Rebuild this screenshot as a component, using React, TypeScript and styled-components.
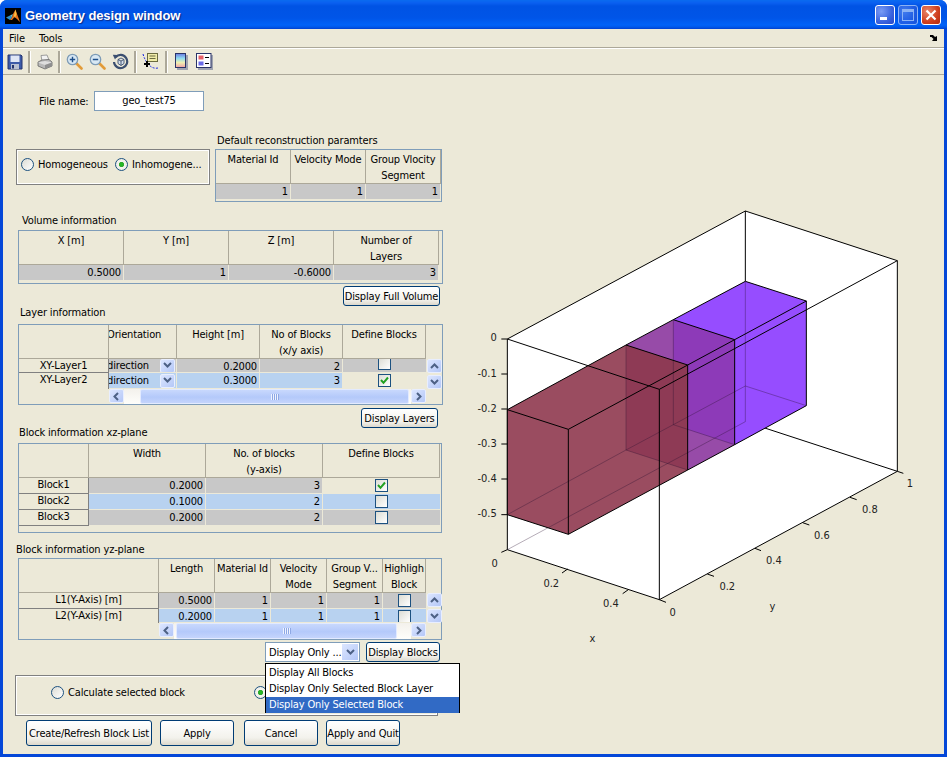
import React from "react";
import styled, { createGlobalStyle } from "styled-components";

const Global = createGlobalStyle`
  html, body { margin: 0; padding: 0; background: #fff; }
  * { box-sizing: border-box; }
`;

const Window = styled.div`
  width: 947px;
  height: 757px;
  display: flex;
  flex-direction: column;
  background: #0447d8;
  border-radius: 7px 7px 0 0;
  overflow: hidden;
  font-family: "DejaVu Sans Condensed", "Liberation Sans", Arial, sans-serif;
  font-size: 11px;
  letter-spacing: -0.15px;
  color: #000;
`;
const TitleBar = styled.div`
  height: 29px;
  flex: none;
  display: flex;
  align-items: center;
  padding: 0 6px 0 5px;
  background: linear-gradient(180deg, #0a6bf0 0, #0a5ff0 3px, #0053e4 6px, #0055e8 18px, #0062f8 25px, #0058ea 27px, #0040d0 29px);
`;
const LogoBox = styled.div`
  width: 16px;
  height: 16px;
  margin-top: 2px;
  flex: none;
`;
const TitleText = styled.span`
  margin-left: 4px;
  padding-top: 2px;
  flex: 1;
  color: #fff;
  font-family: "Liberation Sans", Arial, sans-serif;
  font-size: 13px;
  font-weight: 700;
  letter-spacing: -0.1px;
  text-shadow: 1px 1px 1px #0a2a8a;
`;
const WinButton = styled.div<{ $close?: boolean; $off?: boolean }>`
  width: 20px;
  height: 20px;
  margin-left: 3px;
  border: 1px solid #fff;
  border-radius: 3px;
  display: flex;
  align-items: center;
  justify-content: center;
  opacity: ${(p) => (p.$off ? 0.55 : 1)};
  background: ${(p) =>
    p.$close
      ? "radial-gradient(circle at 30% 30%, #e9866a, #cf3f1e 60%, #b22a10)"
      : "radial-gradient(circle at 30% 30%, #7a9cf5, #3a63de 60%, #2748c8)"};
`;
const Body = styled.div`
  flex: 1;
  margin: 0 3px 3px;
  background: #ece9d8;
  display: flex;
  flex-direction: column;
  min-height: 0;
`;
const MenuBar = styled.div`
  height: 19px;
  flex: none;
  display: flex;
  align-items: center;
  padding-left: 6px;
  position: relative;
  border-bottom: 1px solid #aca899;
`;
const MenuItem = styled.span`
  margin-right: 14px;
  font-size: 11px;
`;
const DockArrow = styled.svg`
  position: absolute;
  right: 6px;
  top: 6px;
`;
const ToolBar = styled.div`
  height: 27px;
  flex: none;
  display: flex;
  align-items: center;
  border-top: 1px solid #fff;
  border-bottom: 1px solid #aca899;
`;
const ToolSlot = styled.div`
  width: 23px;
  height: 24px;
  display: flex;
  align-items: center;
  justify-content: center;
`;
const ToolSep = styled.div<{ $w?: number }>`
  width: ${(p) => p.$w ?? 7}px;
  height: 22px;
  display: flex;
  justify-content: center;
  &::before {
    content: "";
    width: 2px;
    height: 100%;
    background: #aca899;
    border-right: 1px solid #fff;
  }
`;
const Content = styled.div`
  flex: 1;
  display: flex;
  min-height: 0;
`;
const LeftColumn = styled.div`
  width: 467px;
  flex: none;
  display: flex;
  flex-direction: column;
  position: relative;
`;
const ChartPane = styled.div`
  flex: 1;
  padding-top: 124px;
`;
const FileRow = styled.div`
  margin-top: 16px;
  height: 20px;
  padding-left: 36px;
  display: flex;
  align-items: center;
`;
const FileLabel = styled.span`
  width: 55px;
  flex: none;
`;
const FileInput = styled.div`
  width: 110px;
  height: 20px;
  border: 1px solid #7f9db9;
  background: #fff;
  text-align: center;
  line-height: 18px;
`;
const TopRow = styled.div`
  margin-top: 22px;
  padding-left: 13px;
  display: flex;
  align-items: flex-start;
`;
const RadioPanel = styled.div`
  margin-top: 16px;
  width: 194px;
  height: 36px;
  border: 1px solid #808080;
  box-shadow: 0 0 0 1px #fff inset;
  display: flex;
  align-items: center;
  padding: 0 0 5px 4px;
`;
const RadioItem = styled.label<{ $w?: number; $ml?: number }>`
  display: flex;
  align-items: center;
  gap: 4px;
  white-space: nowrap;
  ${(p) => (p.$w ? `width: ${p.$w}px;` : "")}
  ${(p) => (p.$ml ? `margin-left: ${p.$ml}px;` : "")}
`;
const RadioDot = styled.span<{ $on?: boolean }>`
  width: 13px;
  height: 13px;
  flex: none;
  border-radius: 50%;
  border: 1px solid #1c5180;
  background: ${(p) =>
    p.$on
      ? "radial-gradient(circle, #21c121 0, #2ba82b 2.2px, #f4f4ee 3px, #e8e8de 100%)"
      : "linear-gradient(135deg, #dcdcd4, #fff)"};
`;
const TableStack = styled.div`
  margin-left: 5px;
  display: flex;
  flex-direction: column;
`;
const Label = styled.div<{ $left: number; $top?: number; $bottom?: number }>`
  height: 14px;
  line-height: 16px;
  white-space: nowrap;
  margin-left: ${(p) => p.$left}px;
  margin-top: ${(p) => p.$top ?? 0}px;
  margin-bottom: ${(p) => p.$bottom ?? 0}px;
`;
const TableBox = styled.div<{ $cols: string; $rows: string; $w: number; $ml?: number; $pb?: number }>`
  width: ${(p) => p.$w}px;
  margin-left: ${(p) => p.$ml ?? 0}px;
  border: 1px solid #7f9db9;
  padding-bottom: ${(p) => p.$pb ?? 0}px;
  display: grid;
  grid-template-columns: ${(p) => p.$cols};
  grid-template-rows: ${(p) => p.$rows};
`;
const HeadCell = styled.div`
  border-right: 1px solid #aca899;
  border-bottom: 1px solid #aca899;
  text-align: center;
  line-height: 16px;
  padding-top: 2px;
  overflow: hidden;
  white-space: nowrap;
`;
const ClippedHead = styled(HeadCell)`
  text-align: left;
  text-indent: -2px;
`;
const CornerCell = styled(HeadCell)``;
const HeadFiller = styled.div``;
const RowHead = styled.div<{ $last?: boolean }>`
  border-right: 1px solid #808080;
  border-bottom: ${(p) => (p.$last ? "0" : "1px solid #808080")};
  text-align: center;
  line-height: 14px;
  overflow: hidden;
  white-space: nowrap;
`;
const RowHeadEnd = styled(RowHead)`
  border-bottom: 1px solid #808080;
`;
const DataCell = styled.div<{ $sel?: boolean }>`
  background: ${(p) => (p.$sel ? "#b8d2f0" : "#c8c8c8")};
  border-right: 1px solid #ece9d8;
  border-bottom: 1px solid #ece9d8;
  text-align: right;
  padding-right: 2px;
  line-height: 15px;
  overflow: hidden;
  white-space: nowrap;
`;
const ComboCell = styled(DataCell)`
  display: flex;
  align-items: center;
  text-align: left;
  padding-right: 1px;
  justify-content: space-between;
`;
const ComboText = styled.span`
  margin-left: -2px;
`;
const CheckCell = styled.div<{ $bg?: string; $align?: string; $pad?: string }>`
  background: ${(p) => p.$bg ?? "transparent"};
  border-bottom: 1px solid #ece9d8;
  display: flex;
  justify-content: center;
  align-items: ${(p) => p.$align ?? "center"};
  padding: ${(p) => p.$pad ?? "0"};
  overflow: hidden;
`;
const CheckBox = styled.span`
  width: 13px;
  height: 13px;
  flex: none;
  border: 1px solid #1c5180;
  background: linear-gradient(135deg, #dcdcd4, #fff);
  display: flex;
  align-items: center;
  justify-content: center;
`;
const VScroll = styled.div<{ $col: number }>`
  grid-column: ${(p) => p.$col};
  grid-row: 2 / span 2;
  display: flex;
  flex-direction: column;
  justify-content: space-between;
  padding: 0 0 0 1px;
`;
const ScrollBtn = styled.div`
  width: 15px;
  height: 14px;
  flex: none;
  border-radius: 2px;
  background: linear-gradient(135deg, #dce6ff, #b4c7f7);
  border: 1px solid #e8eeff;
  display: flex;
  align-items: center;
  justify-content: center;
`;
const HScroll = styled.div<{ $from: number; $to: number }>`
  grid-column: ${(p) => p.$from} / ${(p) => p.$to};
  grid-row: 4;
  display: flex;
  align-items: stretch;
`;
const HTrack = styled.div<{ $l: number; $r: number }>`
  flex: 1;
  display: flex;
  padding: 0 ${(p) => p.$r}px 0 ${(p) => p.$l}px;
  background: linear-gradient(180deg, #f3f1ec, #fefefb);
`;
const HThumb = styled.div`
  flex: 1;
  border: 1px solid #e2eaff;
  border-radius: 2px;
  background: linear-gradient(180deg, #c8d8fd, #b4c9fa 55%, #c4d4fc);
  display: flex;
  align-items: center;
  justify-content: center;
`;
const Grip = styled.div`
  width: 8px;
  height: 6px;
  background: repeating-linear-gradient(90deg, #eef3ff 0 1px, #8ea8e4 1px 2px);
`;
const ActionRow = styled.div<{ $right: number; $top?: number }>`
  display: flex;
  justify-content: flex-end;
  align-items: flex-start;
  width: 440px;
  padding-right: ${(p) => p.$right}px;
  margin-top: ${(p) => p.$top ?? 2}px;
`;
const XpButton = styled.button<{ $w: number; $h?: number; $ml?: number }>`
  width: ${(p) => p.$w}px;
  height: ${(p) => p.$h ?? 20}px;
  margin-left: ${(p) => p.$ml ?? 0}px;
  padding: 0;
  flex: none;
  border: 1px solid #003c74;
  border-radius: 3px;
  background: linear-gradient(180deg, #fff, #f3f2ec 70%, #dcd8cc);
  font: inherit;
  letter-spacing: inherit;
  white-space: nowrap;
  overflow: hidden;
  color: #000;
`;
const ComboRow = styled.div`
  margin-top: 2px;
  height: 20px;
  padding-left: 262px;
  display: flex;
  position: relative;
`;
const Combo = styled.div`
  width: 95px;
  height: 20px;
  border: 1px solid #7f9db9;
  background: #fff;
  display: flex;
  align-items: center;
  justify-content: space-between;
  padding: 1px 1px 1px 3px;
  white-space: nowrap;
`;
const ComboArrow = styled.div`
  width: 16px;
  height: 100%;
  flex: none;
  background: linear-gradient(135deg, #dce6ff, #b4c7f7);
  display: flex;
  align-items: center;
  justify-content: center;
`;
const DropList = styled.div`
  position: absolute;
  left: 262px;
  top: 21px;
  width: 195px;
  height: 50px;
  z-index: 2;
  border: 1px solid #000;
  background: #fff;
  padding-top: 1px;
`;
const DropItem = styled.div<{ $sel?: boolean }>`
  height: 16px;
  line-height: 16px;
  padding-left: 3px;
  white-space: nowrap;
  background: ${(p) => (p.$sel ? "#316ac5" : "transparent")};
  color: ${(p) => (p.$sel ? "#fff" : "#000")};
`;
const CalcPanel = styled.div`
  margin: 13px 0 0 12px;
  width: 423px;
  height: 41px;
  border: 1px solid #808080;
  box-shadow: 0 0 0 1px #fff inset;
  display: flex;
  align-items: center;
  padding: 0 0 7px 35px;
`;
const BottomRow = styled.div`
  margin-top: 4px;
  padding-left: 23px;
  display: flex;
`;

const Chevron = ({ d = "down", c = "#4d6185" }: { d?: "down" | "up" | "left" | "right"; c?: string }) => {
  const pts = { down: "1,2 4.5,5.5 8,2", up: "1,6 4.5,2.5 8,6", left: "6,1 2.5,4.5 6,8", right: "3,1 6.5,4.5 3,8" }[d];
  return (
    <svg width="9" height="9" viewBox="0 0 9 9">
      <polyline points={pts} fill="none" stroke={c} strokeWidth="2" />
    </svg>
  );
};
const Check = () => (
  <svg width="9" height="9" viewBox="0 0 9 9">
    <polyline points="1,4 3.5,6.8 8,1.5" fill="none" stroke="#21a121" strokeWidth="2" />
  </svg>
);

const MatlabLogo = () => (
  <svg width="16" height="16" viewBox="0 0 16 16">
    <rect width="16" height="16" fill="#000" />
    <path d="M1 9.5 L5 7.5 L7 9.5 L5 12 Z" fill="#2f8fc8" />
    <path d="M5 7.5 L8 6 L7 9.5 Z" fill="#5fc0d8" />
    <path d="M8 6 L10.5 1.5 L12 6 L15 14 L12 11 L9.5 9 L7 12 L5 12 L7 9.5 Z" fill="#e8721c" />
    <path d="M10.5 1.5 L9 7.5 L10 10 L11.5 6 Z" fill="#f8c040" />
  </svg>
);
const Floppy = () => (
  <svg width="16" height="16" viewBox="0 0 16 16">
    <path d="M1 1h13l1 1v13H1z" fill="#3c5aa8" stroke="#24346e" />
    <rect x="3.5" y="1.5" width="9" height="6.5" fill="#dfe6f6" />
    <rect x="4" y="10" width="8" height="5" fill="#b8bfd0" />
    <rect x="5" y="11" width="2" height="3.5" fill="#24346e" />
  </svg>
);
const Printer = () => (
  <svg width="16" height="16" viewBox="0 0 16 16">
    <path d="M4 1.5 L10 1 L12 6 L5 7 Z" fill="#f2f2f2" stroke="#888" strokeWidth=".8" />
    <path d="M1 8 L5 6 L12 5.5 L15 8 V12 L8 15 L1 12 Z" fill="#b9b9b9" stroke="#666" strokeWidth=".8" />
    <path d="M1 8.5 L8 11 L15 8.5 L8 7 Z" fill="#dedede" />
    <path d="M8 11 V15 L15 12 V8.5 Z" fill="#8f8f8f" />
  </svg>
);
const Magnifier = ({ plus }: { plus?: boolean }) => (
  <svg width="17" height="17" viewBox="0 0 17 17">
    <line x1="10.5" y1="10.5" x2="15.5" y2="15.5" stroke="#e29b38" strokeWidth="2.6" strokeLinecap="round" />
    <circle cx="6.5" cy="6.5" r="5.2" fill="#d8e8f4" stroke="#7e9cb6" strokeWidth="1.3" />
    <line x1="3.8" y1="6.5" x2="9.2" y2="6.5" stroke="#1e4f8a" strokeWidth="1.4" />
    {plus && <line x1="6.5" y1="3.8" x2="6.5" y2="9.2" stroke="#1e4f8a" strokeWidth="1.4" />}
  </svg>
);
const Rotate = () => (
  <svg width="17" height="17" viewBox="0 0 17 17">
    <path d="M3.6 4.2 A6.6 6.6 0 1 1 2 9" fill="none" stroke="#3b4f70" strokeWidth="2.2" />
    <path d="M0.8 1.8 L6 2 L3 6.4 Z" fill="#3b4f70" />
    <path d="M6 6.5 L9 5 L12 6.5 V10.5 L9 12.5 L6 10.5 Z M6 6.5 L9 8 L12 6.5 M9 8 V12.5" fill="#d4deea" stroke="#3b4f70" strokeWidth=".9" />
  </svg>
);
const DataCursor = () => (
  <svg width="17" height="17" viewBox="0 0 17 17">
    <path d="M1 1 Q3 8 7 12 T16 15" fill="none" stroke="#1420e0" strokeWidth="1" strokeDasharray="2 1.4" />
    <rect x="5.5" y="0.5" width="10" height="8" fill="#f0eca8" stroke="#6a6a40" />
    <line x1="7.5" y1="3" x2="13.5" y2="3" stroke="#6a6a40" />
    <line x1="7.5" y1="5.5" x2="13.5" y2="5.5" stroke="#6a6a40" />
    <path d="M5 8 V14 M2 11 H8" stroke="#000" strokeWidth="2" />
  </svg>
);
const ColorBar = () => (
  <svg width="13" height="17" viewBox="0 0 13 17">
    <defs>
      <linearGradient id="cb" x1="0" y1="0" x2="0" y2="1">
        <stop offset="0" stopColor="#6a7ae0" />
        <stop offset=".35" stopColor="#90dcf0" />
        <stop offset=".65" stopColor="#f0f0b0" />
        <stop offset="1" stopColor="#f0a0a8" />
      </linearGradient>
    </defs>
    <rect x="2" y="2" width="11" height="15" fill="#a0a4b0" />
    <rect x=".5" y=".5" width="10" height="14" fill="url(#cb)" stroke="#2a3468" />
  </svg>
);
const LegendIcon = () => (
  <svg width="17" height="17" viewBox="0 0 17 17">
    <rect x="2" y="2" width="15" height="15" fill="#a0a4b0" />
    <rect x=".5" y=".5" width="14.5" height="14" fill="#fff" stroke="#2a3468" />
    <rect x="2.5" y="2.5" width="5" height="4" fill="#e86068" />
    <rect x="2.5" y="8.5" width="5" height="4" fill="#6a6ae8" />
    <line x1="9" y1="4.5" x2="13" y2="4.5" stroke="#000" strokeWidth="1" />
    <line x1="9" y1="10.5" x2="13" y2="10.5" stroke="#000" strokeWidth="1" />
  </svg>
);

const Scrollbar = ({ from, to, l, r }: { from: number; to: number; l: number; r: number }) => (
  <HScroll $from={from} $to={to}>
    <ScrollBtn><Chevron d="left" /></ScrollBtn>
    <HTrack $l={l} $r={r}>
      <HThumb><Grip /></HThumb>
    </HTrack>
    <ScrollBtn><Chevron d="right" /></ScrollBtn>
  </HScroll>
);
const VBar = ({ col }: { col: number }) => (
  <VScroll $col={col}>
    <ScrollBtn><Chevron d="up" /></ScrollBtn>
    <ScrollBtn><Chevron d="down" /></ScrollBtn>
  </VScroll>
);

const Axis = styled.line`
  stroke: #000;
  stroke-width: 3;
`;
const Faint = styled.line`
  stroke: #2a1030;
  stroke-opacity: 0.35;
  stroke-width: 3;
`;
const Tick = styled.text`
  font-family: "DejaVu Sans Condensed", "Liberation Sans", Arial, sans-serif;
  font-size: 33px;
  fill: #222;
`;

type Seg = [number, number, number, number];
const axisBack: Seg[] = [
  [112, 420, 826, 36], [826, 36, 1282, 185], [826, 36, 826, 247], [1282, 185, 1282, 817],
  [112, 420, 112, 1052], [112, 1052, 568, 1202], [568, 1202, 1282, 817], [826, 668, 1282, 817],
];
const axisFaint: Seg[] = [
  [826, 247, 826, 561], [826, 561, 1009, 620], [826, 561, 610, 677], [610, 362, 610, 677],
  [610, 677, 794, 737], [610, 677, 468, 753], [468, 438, 468, 753], [468, 753, 653, 813],
  [468, 753, 112, 947], [826, 561, 826, 668], [112, 1052, 826, 668],
];
const edges: Seg[] = [
  [112, 632, 468, 438], [468, 438, 610, 362], [610, 362, 826, 247], [826, 247, 1009, 306],
  [1009, 306, 794, 422], [610, 362, 794, 422], [794, 422, 653, 498], [468, 438, 653, 498],
  [653, 498, 295, 691], [112, 632, 295, 691], [112, 632, 112, 947], [112, 947, 295, 1006],
  [295, 691, 295, 1006], [295, 1006, 653, 813], [653, 498, 653, 813], [653, 813, 794, 737],
  [794, 422, 794, 737], [794, 737, 1009, 620], [1009, 306, 1009, 620],
  [112, 420, 568, 571], [568, 571, 1282, 185], [568, 571, 568, 1202],
];
const ticks: Seg[] = [
  [112, 420, 94, 420], [112, 525, 94, 525], [112, 630, 94, 630], [112, 735, 94, 735], [112, 840, 94, 840], [112, 947, 94, 947],
  [112, 1052, 94, 1060], [293, 1110, 276, 1122], [475, 1172, 458, 1184], [568, 1202, 588, 1210],
  [712, 1125, 732, 1132], [855, 1048, 873, 1055], [998, 971, 1018, 978], [1140, 895, 1160, 902], [1282, 817, 1300, 823],
];
const tickLabels: [string, number, number][] = [
  ["0", 80, 426], ["-0.1", 80, 535], ["-0.2", 80, 639], ["-0.3", 80, 745], ["-0.4", 80, 849], ["-0.5", 80, 955],
  ["0", 83, 1104], ["0.2", 267, 1164], ["0.4", 446, 1224], ["0", 617, 1250], ["0.2", 795, 1172],
  ["0.4", 935, 1095], ["0.6", 1079, 1020], ["0.8", 1223, 942], ["1", 1329, 864],
];

const Chart = () => (
  <svg width="474" height="460" viewBox="0 0 1422 1380">
    <polygon points="112,420 826,36 1282,185 1282,817 568,1202 112,1052" fill="#fff" />
    {axisBack.map((s, i) => <Axis key={i} x1={s[0]} y1={s[1]} x2={s[2]} y2={s[3]} />)}
    <polygon points="610,362 826,247 1009,306 1009,620 794,737 610,677" fill="#964dff" />
    <polygon points="468,438 610,362 794,422 794,737 653,813 468,753" fill="#974ba8" />
    <polygon points="610,362 794,422 794,737 610,677" fill="#8d3ab8" />
    <polygon points="112,632 468,438 653,498 653,813 295,1006 112,947" fill="#9a4c60" />
    <polygon points="468,438 653,498 653,813 468,753" fill="#8e3a55" />
    {axisFaint.map((s, i) => <Faint key={i} x1={s[0]} y1={s[1]} x2={s[2]} y2={s[3]} />)}
    {edges.map((s, i) => <Axis key={i} x1={s[0]} y1={s[1]} x2={s[2]} y2={s[3]} />)}
    {ticks.map((s, i) => <Axis key={i} x1={s[0]} y1={s[1]} x2={s[2]} y2={s[3]} />)}
    {tickLabels.map(([t, x, y], i) => <Tick key={i} x={x} y={y} textAnchor="end">{t}</Tick>)}
    <Tick x={367} y={1330} textAnchor="middle">x</Tick>
    <Tick x={907} y={1232} textAnchor="middle">y</Tick>
  </svg>
);

export default function App() {
  return (
    <>
      <Global />
      <Window>
        <TitleBar>
          <LogoBox><MatlabLogo /></LogoBox>
          <TitleText>Geometry design window</TitleText>
          <WinButton>
            <svg width="12" height="12" viewBox="0 0 12 12"><rect x="1" y="8" width="7" height="3" fill="#fff" /></svg>
          </WinButton>
          <WinButton $off>
            <svg width="14" height="14" viewBox="0 0 14 14"><rect x="1.5" y="1.5" width="11" height="11" fill="none" stroke="#fff" /><rect x="1" y="1" width="12" height="3" fill="#fff" /></svg>
          </WinButton>
          <WinButton $close>
            <svg width="12" height="12" viewBox="0 0 12 12"><path d="M1.5 1.5 L10.5 10.5 M10.5 1.5 L1.5 10.5" stroke="#fff" strokeWidth="2.2" /></svg>
          </WinButton>
        </TitleBar>
        <Body>
          <MenuBar>
            <MenuItem>File</MenuItem>
            <MenuItem>Tools</MenuItem>
            <DockArrow width="8" height="7" viewBox="0 0 8 7">
              <path d="M0 0 H3 L5 2 L7 1 V6 H2 L3.5 4 L1.5 2 H0 Z" fill="#000" />
            </DockArrow>
          </MenuBar>
          <ToolBar>
            <ToolSlot><Floppy /></ToolSlot>
            <ToolSep />
            <ToolSlot><Printer /></ToolSlot>
            <ToolSep />
            <ToolSlot><Magnifier plus /></ToolSlot>
            <ToolSlot><Magnifier /></ToolSlot>
            <ToolSlot><Rotate /></ToolSlot>
            <ToolSep />
            <ToolSlot><DataCursor /></ToolSlot>
            <ToolSep $w={8} />
            <ToolSlot><ColorBar /></ToolSlot>
            <ToolSlot><LegendIcon /></ToolSlot>
          </ToolBar>
          <Content>
            <LeftColumn>
              <FileRow>
                <FileLabel>File name:</FileLabel>
                <FileInput>geo_test75</FileInput>
              </FileRow>
              <TopRow>
                <RadioPanel>
                  <RadioItem $w={94}><RadioDot />Homogeneous</RadioItem>
                  <RadioItem><RadioDot $on />Inhomogene...</RadioItem>
                </RadioPanel>
                <TableStack>
                  <Label $left={2} $bottom={2}>Default reconstruction paramters</Label>
                  <TableBox $w={227} $cols="75px 75px 75px" $rows="34px 16px" $pb={1}>
                    <HeadCell>Material Id</HeadCell>
                    <HeadCell>Velocity Mode</HeadCell>
                    <HeadCell>Group Vlocity<br />Segment</HeadCell>
                    <DataCell>1</DataCell>
                    <DataCell>1</DataCell>
                    <DataCell>1</DataCell>
                  </TableBox>
                </TableStack>
              </TopRow>

              <Label $left={19} $top={11} $bottom={3}>Volume information</Label>
              <TableBox $w={425} $ml={15} $cols="105px 105px 105px 105px" $rows="34px 16px" $pb={2}>
                <HeadCell>X [m]</HeadCell>
                <HeadCell>Y [m]</HeadCell>
                <HeadCell>Z [m]</HeadCell>
                <HeadCell>Number of<br />Layers</HeadCell>
                <DataCell>0.5000</DataCell>
                <DataCell>1</DataCell>
                <DataCell>-0.6000</DataCell>
                <DataCell>3</DataCell>
              </TableBox>
              <ActionRow $right={3}><XpButton $w={97}>Display Full Volume</XpButton></ActionRow>

              <Label $left={17} $top={-1} $bottom={5}>Layer information</Label>
              <TableBox $w={425} $ml={15} $cols="90px 68px 83px 83px 83px 16px" $rows="34px 14px 16px 15px">
                <CornerCell />
                <ClippedHead>Orientation</ClippedHead>
                <HeadCell>Height [m]</HeadCell>
                <HeadCell>No of Blocks<br />(x/y axis)</HeadCell>
                <HeadCell>Define Blocks</HeadCell>
                <HeadFiller />
                <RowHead>XY-Layer1</RowHead>
                <ComboCell><ComboText>direction</ComboText><ScrollBtn><Chevron /></ScrollBtn></ComboCell>
                <DataCell>0.2000</DataCell>
                <DataCell>2</DataCell>
                <CheckCell $bg="#c8c8c8" $align="flex-end" $pad="0 0 2px"><CheckBox /></CheckCell>
                <VBar col={6} />
                <RowHead $last>XY-Layer2</RowHead>
                <ComboCell $sel><ComboText>direction</ComboText><ScrollBtn><Chevron /></ScrollBtn></ComboCell>
                <DataCell $sel>0.3000</DataCell>
                <DataCell $sel>3</DataCell>
                <CheckCell><CheckBox><Check /></CheckBox></CheckCell>
                <Scrollbar from={2} to={6} l={16} r={2} />
              </TableBox>
              <ActionRow $right={5} $top={3}><XpButton $w={77}>Display Layers</XpButton></ActionRow>

              <Label $left={16} $top={-3} $bottom={4}>Block information xz-plane</Label>
              <TableBox $w={424} $ml={15} $cols="70px 117px 117px 117px" $rows="34px 16px 16px 16px" $pb={6}>
                <CornerCell />
                <HeadCell>Width</HeadCell>
                <HeadCell>No. of blocks<br />(y-axis)</HeadCell>
                <HeadCell>Define Blocks</HeadCell>
                <RowHeadEnd>Block1</RowHeadEnd>
                <DataCell>0.2000</DataCell>
                <DataCell>3</DataCell>
                <CheckCell><CheckBox><Check /></CheckBox></CheckCell>
                <RowHeadEnd>Block2</RowHeadEnd>
                <DataCell $sel>0.1000</DataCell>
                <DataCell $sel>2</DataCell>
                <CheckCell $bg="#b8d2f0"><CheckBox /></CheckCell>
                <RowHeadEnd>Block3</RowHeadEnd>
                <DataCell>0.2000</DataCell>
                <DataCell>2</DataCell>
                <CheckCell $bg="#c8c8c8"><CheckBox /></CheckCell>
              </TableBox>

              <Label $left={13} $top={9} $bottom={2}>Block information yz-plane</Label>
              <TableBox $w={424} $ml={15} $cols="140px 56px 56px 56px 56px 43px 15px" $rows="34px 16px 14px 16px">
                <CornerCell />
                <HeadCell>Length</HeadCell>
                <HeadCell>Material Id</HeadCell>
                <HeadCell>Velocity<br />Mode</HeadCell>
                <HeadCell>Group V...<br />Segment</HeadCell>
                <HeadCell>Highligh<br />Block</HeadCell>
                <HeadFiller />
                <RowHead>L1(Y-Axis) [m]</RowHead>
                <DataCell>0.5000</DataCell>
                <DataCell>1</DataCell>
                <DataCell>1</DataCell>
                <DataCell>1</DataCell>
                <CheckCell $bg="#c8c8c8"><CheckBox /></CheckCell>
                <VBar col={7} />
                <RowHead $last>L2(Y-Axis) [m]</RowHead>
                <DataCell $sel>0.2000</DataCell>
                <DataCell $sel>1</DataCell>
                <DataCell $sel>1</DataCell>
                <DataCell $sel>1</DataCell>
                <CheckCell $bg="#b8d2f0" $align="flex-start" $pad="1px 0 0"><CheckBox /></CheckCell>
                <Scrollbar from={2} to={7} l={2} r={14} />
              </TableBox>

              <ComboRow>
                <Combo>Display Only ...<ComboArrow><Chevron /></ComboArrow></Combo>
                <XpButton $w={74} $ml={6}>Display Blocks</XpButton>
                <DropList>
                  <DropItem>Display All Blocks</DropItem>
                  <DropItem>Display Only Selected Block Layer</DropItem>
                  <DropItem $sel>Display Only Selected Block</DropItem>
                </DropList>
              </ComboRow>
              <CalcPanel>
                <RadioItem><RadioDot />Calculate selected block</RadioItem>
                <RadioItem $ml={69}><RadioDot $on /></RadioItem>
              </CalcPanel>
              <BottomRow>
                <XpButton $w={126} $h={26}>Create/Refresh Block List</XpButton>
                <XpButton $w={74} $h={26} $ml={8}>Apply</XpButton>
                <XpButton $w={74} $h={26} $ml={10}>Cancel</XpButton>
                <XpButton $w={74} $h={26} $ml={8}>Apply and Quit</XpButton>
              </BottomRow>
            </LeftColumn>
            <ChartPane><Chart /></ChartPane>
          </Content>
        </Body>
      </Window>
    </>
  );
}
